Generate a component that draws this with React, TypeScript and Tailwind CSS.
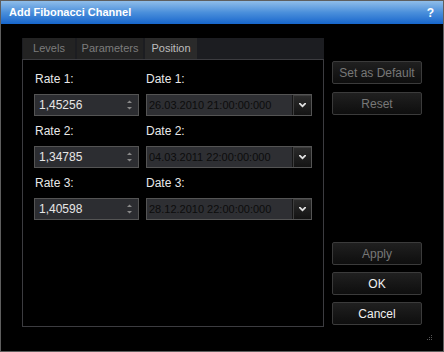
import React from "react";

const font = { fontFamily: '"Liberation Sans", Arial, sans-serif' };

function Spinner() {
  return (
    <svg width="7" height="12" viewBox="0 0 7 12" className="mr-[5px]">
      <path d="M3.5 1.5 L6 4 L1 4 Z" fill="#8a8a8a" />
      <path d="M1 8 L6 8 L3.5 10.5 Z" fill="#8a8a8a" />
    </svg>
  );
}

function Chevron() {
  return (
    <svg width="7" height="5" viewBox="0 0 7 5">
      <path d="M0 0 L1.5 0 L3.5 2 L5.5 0 L7 0 L7 1 L3.5 4.5 L0 1 Z" fill="#e0e0e0" />
    </svg>
  );
}

function RateInput({ value }: { value: string }) {
  return (
    <div className="h-[22px] w-[105px] flex items-center justify-between bg-[#2c2d31] border border-[#545454] pl-[4px] text-[12px] text-[#e6e6e6]">
      <span>{value}</span>
      <Spinner />
    </div>
  );
}

function DateInput({ value }: { value: string }) {
  return (
    <div className="h-[22px] w-[166px] flex items-stretch bg-[#2e2f33] border border-[#545454]">
      <div className="flex-1 flex items-center pl-[2px] text-[11px] text-[#0c0c0c]">{value}</div>
      <div className="w-[19px] flex items-center justify-center bg-gradient-to-b from-[#2c2c2c] to-[#141414] border-l border-[#151515] shadow-[inset_1px_1px_0_#3e3e3e]">
        <Chevron />
      </div>
    </div>
  );
}

function Btn({ label, enabled }: { label: string; enabled?: boolean }) {
  return (
    <div
      className={
        "h-[23px] w-[90px] flex items-center justify-center rounded-[2px] border border-[#3b3b3b] bg-gradient-to-b from-[#202020] to-[#0e0e0e] text-[12px] " +
        (enabled ? "text-[#f0f0f0]" : "text-[#777777]")
      }
    >
      {label}
    </div>
  );
}

export default function App() {
  const rows = [
    { r: "Rate 1:", d: "Date 1:", rv: "1,45256", dv: "26.03.2010 21:00:00:000" },
    { r: "Rate 2:", d: "Date 2:", rv: "1,34785", dv: "04.03.2011 22:00:00:000" },
    { r: "Rate 3:", d: "Date 3:", rv: "1,40598", dv: "28.12.2010 22:00:00:000" },
  ];
  return (
    <div style={font} className="w-[444px] h-[352px] bg-black border border-[#5e5e5e] flex flex-col relative overflow-hidden">
      <div className="h-[23px] shrink-0 flex items-center justify-between pl-[8px] pr-[9px] bg-gradient-to-b from-[#8fbde9] via-[#4a8fdb] to-[#1566cc] text-white font-bold text-[11px]">
        <span>Add Fibonacci Channel</span>
        <span className="text-[12px]">?</span>
      </div>
      <div className="flex pt-[14px] pl-[21px]">
        <div className="w-[302px] flex flex-col">
          <div className="h-[21px] bg-[#1c1d21] flex gap-[2px] pl-[1px] text-[11px]">
            <div className="w-[52px] bg-[#232323] text-[#7c7c7c] flex items-center justify-center">Levels</div>
            <div className="w-[66px] bg-[#232323] text-[#7c7c7c] flex items-center justify-center">Parameters</div>
            <div className="w-[52px] bg-[#2a2a2a] text-[#bdbdbd] flex items-center justify-center">Position</div>
          </div>
          <div className="h-[268px] border border-[#3c3c40] pl-[11px] pt-[12px] flex flex-col gap-[8px]">
            {rows.map((row) => (
              <div key={row.r} className="flex gap-[7px]">
                <div className="flex flex-col gap-[8px]">
                  <div className="text-[12px] text-[#e8e8e8] leading-[14px] pl-[1px]">{row.r}</div>
                  <RateInput value={row.rv} />
                </div>
                <div className="flex flex-col gap-[8px]">
                  <div className="text-[12px] text-[#e8e8e8] leading-[14px]">{row.d}</div>
                  <DateInput value={row.dv} />
                </div>
              </div>
            ))}
          </div>
        </div>
        <div className="ml-[8px] pt-[23px] flex flex-col">
          <div className="flex flex-col gap-[8px]">
            <Btn label="Set as Default" />
            <Btn label="Reset" />
          </div>
          <div className="mt-[127px] flex flex-col gap-[7px]">
            <Btn label="Apply" />
            <Btn label="OK" enabled />
            <Btn label="Cancel" enabled />
          </div>
        </div>
      </div>
      <svg className="absolute right-[10px] bottom-[10px]" width="6" height="6" viewBox="0 0 6 6">
        <rect x="4" y="0" width="1" height="1" fill="#555" />
        <rect x="2" y="2" width="1" height="1" fill="#555" />
        <rect x="4" y="2" width="1" height="1" fill="#555" />
        <rect x="0" y="4" width="1" height="1" fill="#555" />
        <rect x="2" y="4" width="1" height="1" fill="#555" />
        <rect x="4" y="4" width="1" height="1" fill="#555" />
      </svg>
    </div>
  );
}
